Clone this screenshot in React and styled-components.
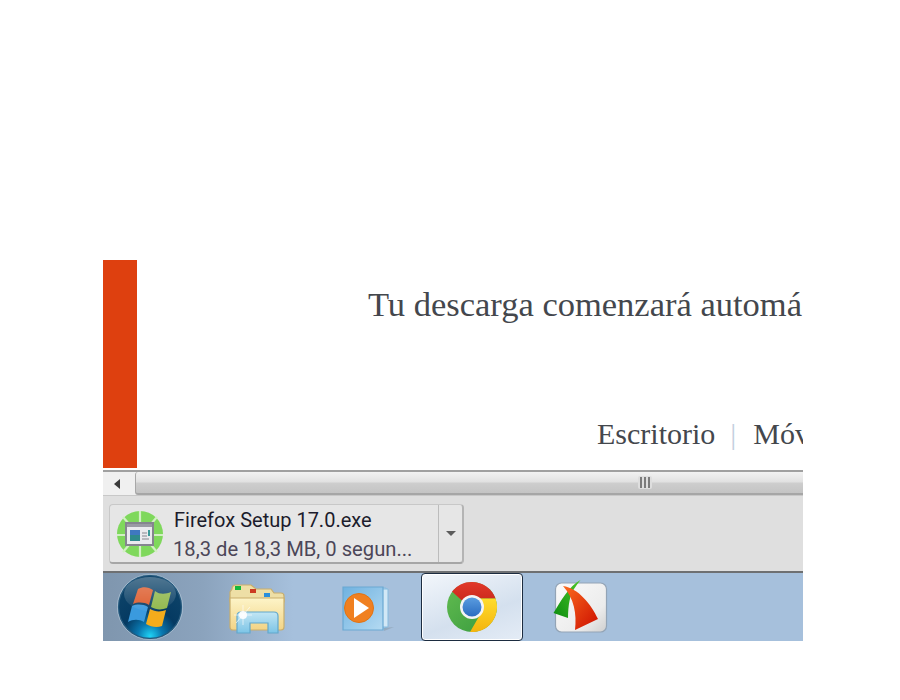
import styled, { createGlobalStyle } from "styled-components"

const GlobalStyle = createGlobalStyle`
html, body {
  margin: 0;
  padding: 0;
  background: #ffffff;
}
`

function DownloadIcon() {
  return (
    <svg width="48" height="48" viewBox="0 0 48 48">
      <circle cx="24" cy="24" r="23" fill="#7fd85c" />
      <g stroke="#d2f0c4" strokeWidth="2.2">
        <path d="M24 1V14M24 36V47M1 25H10M38 25H47M7 7L13 14M41 7L35 14M7 42L13 35M41 42L35 35" />
      </g>
      <rect x="10" y="13" width="27" height="22" fill="#eaeaee" stroke="#85858f" strokeWidth="2" />
      <rect x="11" y="14" width="25" height="3" fill="#9a9aa4" />
      <rect x="14" y="20" width="10" height="11" fill="#2f8a8c" />
      <rect x="14" y="20" width="10" height="5" fill="#3f78c0" />
      <path d="M26 23H31M26 26H31M26 29H33" stroke="#a8a8ae" strokeWidth="1.4" />
      <rect x="32" y="20" width="2" height="6" fill="#3c9a9a" />
    </svg>
  )
}

function WindowsOrb() {
  return (
    <svg width="66" height="66" viewBox="0 0 66 66">
      <defs>
        <radialGradient id="orb" cx="50%" cy="96%" r="78%">
          <stop offset="0" stopColor="#1fd4f6" />
          <stop offset="0.25" stopColor="#0a78b0" />
          <stop offset="0.55" stopColor="#053a62" />
          <stop offset="1" stopColor="#0c4268" />
        </radialGradient>
        <linearGradient id="gloss" x1="0" y1="0" x2="0" y2="1">
          <stop offset="0" stopColor="#ffffff" stopOpacity="0.28" />
          <stop offset="1" stopColor="#ffffff" stopOpacity="0.04" />
        </linearGradient>
      </defs>
      <circle cx="33" cy="33" r="31.6" fill="url(#orb)" stroke="#24587c" strokeWidth="1.6" />
      <circle cx="33" cy="33" r="32.6" fill="none" stroke="#c8d8e6" strokeWidth="0.6" />
      <path d="M21 15C26 12 32 13 36 16L32 31C27 28 21 28 16 30Z" fill="#dc5a2a" />
      <path d="M38 17C43 21 49 20 54 18L50 34C45 36 39 36 34 33Z" fill="#8eb648" />
      <path d="M15 32C20 30 26 30 31 33L27 48C22 45 16 45 11 48Z" fill="#3a9ade" />
      <path d="M33 35C38 38 44 38 49 36L45 52C40 54 34 53 29 50Z" fill="#f4ac1c" />
      <ellipse cx="33" cy="20" rx="26" ry="17" fill="url(#gloss)" />
    </svg>
  )
}

function FolderIcon() {
  return (
    <svg width="56" height="50" viewBox="0 0 56 50">
      <defs>
        <linearGradient id="folder" x1="0" y1="0" x2="0" y2="1">
          <stop offset="0" stopColor="#fdf4c8" />
          <stop offset="1" stopColor="#f2d486" />
        </linearGradient>
        <linearGradient id="stand" x1="0" y1="0" x2="0" y2="1">
          <stop offset="0" stopColor="#c2e6f4" />
          <stop offset="1" stopColor="#7cc4e6" />
        </linearGradient>
      </defs>
      <path d="M3 5Q3 1 7 1H22L27 5H42L45 9H52Q55 9 55 12V18H1V8Z" fill="#eedfa6" stroke="#c9ae6c" strokeWidth="1.2" />
      <rect x="6" y="2" width="6" height="4" fill="#14b83c" />
      <rect x="21" y="5" width="6" height="4" fill="#cc3a22" />
      <rect x="35" y="9" width="6" height="4" fill="#2a8fdc" />
      <path d="M1 14H55V43Q55 46 52 46H4Q1 46 1 43Z" fill="url(#folder)" stroke="#c9ae6c" strokeWidth="1.2" />
      <path d="M8 49V32Q8 28 12 28H45Q49 28 49 32V49H39V39H21V49Z" fill="url(#stand)" stroke="#62a8cc" strokeWidth="1.2" />
      <circle cx="14" cy="31" r="4" fill="#ffffff" opacity="0.9" />
      <path d="M14 21V41M5 31H23M21 23L7 39" stroke="#ffffff" strokeWidth="0.8" opacity="0.8" />
    </svg>
  )
}

function MediaIcon() {
  return (
    <svg width="54" height="50" viewBox="0 0 54 50">
      <defs>
        <linearGradient id="mediaCase" x1="0" y1="0" x2="1" y2="1">
          <stop offset="0" stopColor="#6fb2e0" />
          <stop offset="1" stopColor="#b4daf2" />
        </linearGradient>
      </defs>
      <path d="M37 3H44V43H37Z" fill="#b8dcf2" stroke="#86bade" />
      <path d="M40 4H46V42H40Z" fill="#d2e8f6" stroke="#86bade" />
      <path d="M1 2H41V45H1Z" fill="url(#mediaCase)" stroke="#6aa8d2" strokeWidth="1.2" />
      <path d="M42 43L52 42L42 46Z" fill="#8a9cae" opacity="0.6" />
      <circle cx="17" cy="23" r="14.5" fill="#f08020" stroke="#e07414" />
      <path d="M12 13L27 23L12 33Z" fill="#ffffff" />
    </svg>
  )
}

function ChromeIcon() {
  return (
    <svg width="52" height="52" viewBox="0 0 52 52">
      <defs>
        <linearGradient id="chromeRed" x1="0" y1="0" x2="0" y2="1">
          <stop offset="0" stopColor="#e2382a" />
          <stop offset="1" stopColor="#c9281c" />
        </linearGradient>
        <linearGradient id="chromeYellow" x1="0" y1="0" x2="0" y2="1">
          <stop offset="0" stopColor="#ffdc2c" />
          <stop offset="1" stopColor="#f4b40e" />
        </linearGradient>
        <linearGradient id="chromeGreen" x1="0" y1="0" x2="1" y2="1">
          <stop offset="0" stopColor="#62bc50" />
          <stop offset="1" stopColor="#389a3e" />
        </linearGradient>
        <linearGradient id="chromeBlue" x1="0" y1="0" x2="0" y2="1">
          <stop offset="0" stopColor="#5a9ce0" />
          <stop offset="1" stopColor="#2a6cc0" />
        </linearGradient>
      </defs>
      <circle cx="26" cy="26" r="25" fill="url(#chromeGreen)" />
      <path d="M26 1A25 25 0 0 1 49.5 17.5H26A9 9 0 0 0 17.5 21L6 10.5A25 25 0 0 1 26 1Z" fill="url(#chromeRed)" />
      <path d="M49.5 17.5A25 25 0 0 1 24 51L35 32A9 9 0 0 0 26 17.5Z" fill="url(#chromeYellow)" />
      <circle cx="26" cy="26" r="12" fill="#f4f4f4" />
      <circle cx="26" cy="26" r="9.5" fill="url(#chromeBlue)" />
    </svg>
  )
}

function ScreenshotIcon() {
  return (
    <svg width="56" height="54" viewBox="0 0 56 54">
      <defs>
        <linearGradient id="red" x1="0" y1="0" x2="1" y2="1">
          <stop offset="0" stopColor="#fb6a1e" />
          <stop offset="1" stopColor="#cc0e00" />
        </linearGradient>
        <linearGradient id="green" x1="1" y1="0" x2="0" y2="1">
          <stop offset="0" stopColor="#4cc828" />
          <stop offset="1" stopColor="#0c8c10" />
        </linearGradient>
        <linearGradient id="card" x1="0" y1="0" x2="1" y2="1">
          <stop offset="0" stopColor="#fafafa" />
          <stop offset="0.7" stopColor="#ececec" />
          <stop offset="1" stopColor="#cfcfcf" />
        </linearGradient>
      </defs>
      <rect x="3.5" y="3" width="51" height="49" rx="6" fill="url(#card)" stroke="#93a4b6" strokeWidth="1.2" />
      <path d="M28.5 0C18 5 8 22 1.5 33L16 38C16 26 18 14 22 9C24 6 26 3 28.5 0Z" fill="url(#green)" />
      <path d="M11 6C26 8 39 24 46 39L23 50C25 34 22 18 11 6Z" fill="url(#red)" />
    </svg>
  )
}

function App() {
  return (
    <Page>
      <GlobalStyle />
      <Screen>
        <Viewport>
          <StripeBar />
          <Content>
            <Headline>Tu descarga comenzará automá</Headline>
            <Platforms>
              Escritorio<Divider>|</Divider>Móv
            </Platforms>
          </Content>
        </Viewport>

        <ScrollBar>
          <ScrollButton>
            <LeftArrow />
          </ScrollButton>
          <ScrollThumb>
            <Grip>
              <i /><i /><i />
            </Grip>
          </ScrollThumb>
        </ScrollBar>

        <DownloadBar>
          <DownloadItem>
            <DownloadMain>
              <DownloadIcon />
              <DownloadText>
                <FileName>Firefox Setup 17.0.exe</FileName>
                <FileStatus>18,3 de 18,3 MB, 0 segun...</FileStatus>
              </DownloadText>
            </DownloadMain>
            <DownloadMenu>
              <DownArrow />
            </DownloadMenu>
          </DownloadItem>
        </DownloadBar>

        <Taskbar>
          <StartButton>
            <WindowsOrb />
          </StartButton>
          <TaskItem $width={119} $drop={4}><FolderIcon /></TaskItem>
          <TaskItem $width={105} $drop={6}><MediaIcon /></TaskItem>
          <TaskItem $width={102} $active><ChromeIcon /></TaskItem>
          <TaskItem $width={113}><ScreenshotIcon /></TaskItem>
        </Taskbar>
      </Screen>
    </Page>
  )
}

const Page = styled.div`
width: 900px;
height: 700px;
box-sizing: border-box;
padding: 260px 0 0 103px;
background: #ffffff;
overflow: hidden;
`

const Screen = styled.div`
width: 700px;
height: 381px;
display: flex;
flex-direction: column;
overflow: hidden;
`

const Viewport = styled.div`
height: 210px;
display: flex;
background: #ffffff;
`

const StripeBar = styled.div`
width: 34px;
height: 208px;
flex-shrink: 0;
background: #de400f;
`

const Content = styled.div`
flex: 1;
min-width: 0;
overflow: hidden;
white-space: nowrap;
font-family: "Liberation Serif", serif;
color: #44474d;
`

const Headline = styled.div`
padding: 25px 0 0 231px;
font-size: 34.5px;
line-height: 38px;
`

const Platforms = styled.div`
padding: 95px 0 0 460px;
font-size: 30px;
line-height: 32px;
`

const Divider = styled.span`
margin: 0 17px 0 15px;
color: #c4cfe0;
`

const ScrollBar = styled.div`
height: 25px;
display: flex;
box-sizing: border-box;
border-top: 2px solid #a0a0a0;
background: #f0f0f0;
`

const ScrollButton = styled.div`
width: 32px;
box-sizing: border-box;
padding-right: 4px;
display: flex;
align-items: center;
justify-content: center;
`

const LeftArrow = styled.div`
width: 0;
height: 0;
border-top: 5px solid transparent;
border-bottom: 5px solid transparent;
border-right: 6px solid #3a3a3a;
`

const ScrollThumb = styled.div`
flex: 1;
display: flex;
align-items: center;
justify-content: center;
padding-left: 350px;
border-left: 1px solid #a8a8a8;
border-bottom: 2px solid #a6a6a6;
border-radius: 3px 0 0 3px;
background: linear-gradient(#f2f2f2, #e2e2e2 45%, #cdcdcd 55%, #c4c4c4);
`

const Grip = styled.div`
display: flex;
gap: 2px;
padding: 1px 2px;
border-radius: 2px;
background: #dedede;

i {
  width: 2px;
  height: 11px;
  background: #7c7c7c;
}
`

const DownloadBar = styled.div`
height: 78px;
box-sizing: border-box;
padding: 8px 0 0 6px;
background: #dfdfdf;
border-top: 1px solid #c8c8c8;
border-bottom: 2px solid #6e7072;
`

const DownloadItem = styled.div`
width: 355px;
height: 60px;
display: flex;
box-sizing: border-box;
border: 1px solid #c8c8c8;
border-bottom: 2px solid #a6a6a6;
border-right: 2px solid #b4b4b4;
border-radius: 4px;
background: #e6e6e6;
`

const DownloadMain = styled.div`
flex: 1;
display: flex;
align-items: center;
gap: 9px;
padding: 0 0 0 6px;
`

const DownloadText = styled.div`
display: flex;
flex-direction: column;
gap: 5px;
padding-top: 2px;
white-space: nowrap;
font-family: Roboto, "Liberation Sans", sans-serif;
`

const FileName = styled.div`
padding-left: 1px;
font-size: 20px;
line-height: 24px;
color: #1c1c2c;
`

const FileStatus = styled.div`
font-size: 20.2px;
line-height: 24px;
color: #4c4658;
`

const DownloadMenu = styled.div`
width: 23px;
display: flex;
align-items: center;
justify-content: center;
border-left: 1px solid #bcbcbc;
`

const DownArrow = styled.div`
width: 0;
height: 0;
border-left: 5px solid transparent;
border-right: 5px solid transparent;
border-top: 5px solid #5c5c5c;
`

const Taskbar = styled.div`
flex: 1;
display: flex;
align-items: center;
background: linear-gradient(90deg, #7f96ae 0, #8ba3bd 100px, #a6c0dc 190px, #a6c0dc);
`

const StartButton = styled.div`
width: 94px;
display: flex;
justify-content: center;
`

const TaskItem = styled.div`
width: ${(p) => p.$width}px;
height: 68px;
display: flex;
align-items: center;
justify-content: center;
box-sizing: border-box;
padding-top: ${(p) => p.$drop || 0}px;
border-radius: 4px;
${(p) => p.$active && `
  border: 1px solid #1c2c40;
  background: linear-gradient(160deg, #f2f6fb, #d4e0ee 60%, #e4ecf6);
  box-shadow: inset 0 0 0 1px #ffffff;
`}
`

export default App
